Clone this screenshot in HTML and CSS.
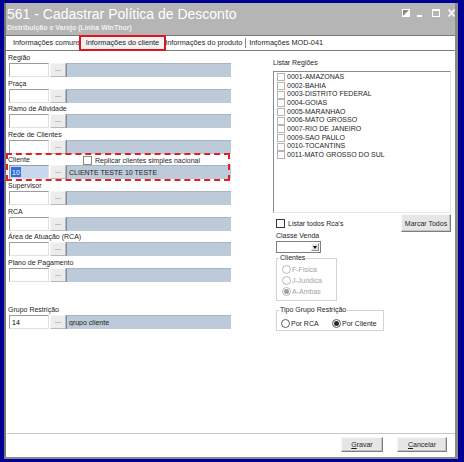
FILE: index.html
```html
<!DOCTYPE html>
<html lang="pt-BR">
<head>
    <meta charset="UTF-8">
    <meta name="viewport" content="width=device-width, initial-scale=1.0">
    <title>561 - Cadastrar Política de Desconto</title>
    <link rel="stylesheet" href="styles.css">
</head>
<body>

<div class="window">
    <header class="titlebar">
        <div class="title-text">
            <h1>561 - Cadastrar Política de Desconto</h1>
            <p class="subtitle">Distribuição e Varejo (Linha WinThor)</p>
        </div>
        <svg class="controls" width="53" height="8" viewBox="0 0 53 8">
            <!-- desacoplar -->
            <rect x="0.5" y="0.5" width="7" height="7" fill="#fff" stroke="#fff"/>
            <path d="M1 1 L7 1 L1 7 Z" fill="#8c8c8c"/>
            <!-- minimizar -->
            <rect x="15" y="6" width="5" height="2" fill="#fff"/>
            <!-- maximizar -->
            <rect x="30.5" y="0.5" width="7" height="7" fill="none" stroke="#fff"/>
            <rect x="30" y="0" width="8" height="2" fill="#fff"/>
            <!-- fechar -->
            <path d="M46.5 0.5 L52.5 7.5 M52.5 0.5 L46.5 7.5" stroke="#fff" stroke-width="1.6"/>
        </svg>
    </header>

    <nav class="tabs">
        <span class="tab">Informações comuns</span>
        <span class="tab active">Informações do cliente</span>
        <span class="tab">Informações do produto</span>
        <span class="tab-sep"></span>
        <span class="tab">Informações MOD-041</span>
    </nav>

    <main class="content">
        <section class="col-left">
            <div class="field">
                <label>Região</label>
                <div class="lookup"><input class="code"><button class="dots">...</button><input class="desc" readonly></div>
            </div>
            <div class="field">
                <label>Praça</label>
                <div class="lookup"><input class="code"><button class="dots">...</button><input class="desc" readonly></div>
            </div>
            <div class="field">
                <label>Ramo de Atividade</label>
                <div class="lookup"><input class="code"><button class="dots">...</button><input class="desc" readonly></div>
            </div>
            <div class="field">
                <label>Rede de Clientes</label>
                <div class="lookup"><input class="code"><button class="dots">...</button><input class="desc" readonly></div>
            </div>
            <div class="field highlight">
                <div class="label-row">
                    <label>Cliente</label>
                    <span class="check-label replicar"><span class="check"></span>Replicar clientes simples nacional</span>
                </div>
                <div class="lookup">
                    <span class="code selected"><span class="sel-text">10</span></span><button class="dots">...</button><input class="desc" readonly value="CLIENTE TESTE 10 TESTE">
                </div>
            </div>
            <div class="field">
                <label>Supervisor</label>
                <div class="lookup"><input class="code"><button class="dots">...</button><input class="desc" readonly></div>
            </div>
            <div class="field">
                <label>RCA</label>
                <div class="lookup"><input class="code"><button class="dots">...</button><input class="desc" readonly></div>
            </div>
            <div class="field">
                <label>Área de Atuação (RCA)</label>
                <div class="lookup"><input class="code"><button class="dots">...</button><input class="desc" readonly></div>
            </div>
            <div class="field">
                <label>Plano de Pagamento</label>
                <div class="lookup"><input class="code"><button class="dots">...</button><input class="desc" readonly></div>
            </div>
            <div class="field grupo">
                <label>Grupo Restrição</label>
                <div class="lookup"><input class="code" value="14"><button class="dots">...</button><input class="desc" readonly value="grupo cliente"></div>
            </div>
        </section>

        <section class="col-right">
            <div class="regions-title">Listar Regiões</div>
            <ul class="region-list">
                <li><span class="check light"></span>0001-AMAZONAS</li>
                <li><span class="check light"></span>0002-BAHIA</li>
                <li><span class="check light"></span>0003-DISTRITO FEDERAL</li>
                <li><span class="check light"></span>0004-GOIAS</li>
                <li><span class="check light"></span>0005-MARANHAO</li>
                <li><span class="check light"></span>0006-MATO GROSSO</li>
                <li><span class="check light"></span>0007-RIO DE JANEIRO</li>
                <li><span class="check light"></span>0009-SAO PAULO</li>
                <li><span class="check light"></span>0010-TOCANTINS</li>
                <li><span class="check light"></span>0011-MATO GROSSO DO SUL</li>
            </ul>

            <div class="rca-row">
                <span class="check-label"><span class="check dark"></span>Listar todos Rca's</span>
                <button class="btn marcar">Marcar Todos</button>
            </div>

            <div class="small-label">Classe Venda</div>
            <div class="combo"><span class="combo-arrow"></span></div>

            <fieldset class="group clientes">
                <legend>Clientes</legend>
                <div class="radio-row disabled"><span class="radio"></span>F-Fisica</div>
                <div class="radio-row disabled"><span class="radio"></span>J-Juridica</div>
                <div class="radio-row disabled"><span class="radio checked"></span>A-Ambas</div>
            </fieldset>

            <fieldset class="group tipo">
                <legend>Tipo Grupo Restrição</legend>
                <div class="radio-line">
                    <span class="radio-row por-rca"><span class="radio"></span>Por RCA</span>
                    <span class="radio-row"><span class="radio checked"></span>Por Cliente</span>
                </div>
            </fieldset>
        </section>
    </main>

    <footer class="footer">
        <button class="btn action"><u>G</u>ravar</button>
        <button class="btn action"><u>C</u>ancelar</button>
    </footer>
</div>

</body>
</html>
```

FILE: styles.css
```css
* {
    box-sizing: border-box;
}
body {
    margin: 0;
    background-color: #000094;
    font-family: "Liberation Sans", Arial, sans-serif;
    font-size: 7px;
    color: #1e1e1e;
}
.window {
    width: 454px;
    height: 456px;
    margin: 3px 0 0 4px;
    background-color: #fff;
    border-left: 2px solid #767676;
    border-right: 3px solid #8a8a8a;
    border-bottom: 2px solid #8a8a8a;
    display: flex;
    flex-direction: column;
}

/* barra de titulo */
.titlebar {
    height: 32px;
    flex-shrink: 0;
    background-color: #b5b5b5;
    color: #fff;
    display: flex;
    justify-content: space-between;
    padding: 2px 0 0 1px;
}
.titlebar h1 {
    margin: 0;
    font-size: 14px;
    font-weight: normal;
    line-height: 18px;
}
.subtitle {
    margin: 0;
    font-size: 7px;
    font-weight: bold;
    line-height: 9px;
    color: #f0f0f0;
}
.controls {
    margin-top: 4px;
}

/* abas */
.tabs {
    height: 16px;
    flex-shrink: 0;
    border-top: 1px solid #7b7b7b;
    border-bottom: 1px solid #7b7b7b;
    display: flex;
    align-items: center;
    padding-left: 6px;
    font-size: 7.3px;
}
.tab {
    line-height: 12px;
    padding: 0 1px;
    white-space: nowrap;
}
.tab.active {
    padding: 0 5px 0 5px;
    margin-left: -1px;
    background-color: #f2f2f2;
    outline: 2px solid #e0141c;
}
.tab-sep {
    width: 1px;
    height: 10px;
    background-color: #8a8a8a;
    margin: 0 2px 0 2px;
}

/* conteudo */
.content {
    flex: 1;
    display: grid;
    grid-template-columns: 226px 178px;
    column-gap: 41px;
}
.col-left {
    padding-top: 2px;
}
.field {
    height: 25.6px;
}
.field label {
    display: block;
    height: 10px;
    line-height: 10px;
    padding-left: 2px;
}
.lookup {
    display: flex;
    height: 14px;
    padding-left: 3px;
}
.code {
    width: 40px;
    height: 14px;
    margin: 0;
    padding: 0 2px;
    font: inherit;
    border: 1px solid;
    border-color: #9c9c9c #e0e0e0 #e0e0e0 #9c9c9c;
    background-color: #fff;
}
.code.selected {
    display: flex;
    align-items: center;
    padding: 1px;
    background-color: #c9d8ee;
}
.sel-text {
    background-color: #2f6fd6;
    color: #fff;
    height: 100%;
    line-height: 11px;
    padding: 0 1px;
}
.dots {
    width: 16px;
    height: 14px;
    margin: 0 0 0 1px;
    padding: 0 0 3px;
    font: inherit;
    font-size: 7px;
    color: #444;
    background-color: #ececec;
    border: 1px solid;
    border-color: #f6f6f6 #b9b9b9 #b9b9b9 #f6f6f6;
}
.desc {
    width: 165px;
    height: 14px;
    margin: 0;
    padding: 0 2px;
    font: inherit;
    color: #1e1e1e;
    background-color: #bdcad9;
    border: none;
    border-left: 1px solid #7f8b98;
    border-top: 1px solid #a9b5c3;
}
.label-row {
    display: flex;
    height: 10px;
    align-items: center;
}
.label-row label {
    width: 77px;
}
.highlight {
    position: relative;
}
/* marcação tracejada sobre o campo Cliente */
.highlight::after {
    content: "";
    position: absolute;
    left: 0;
    right: 2px;
    top: -2px;
    bottom: 0;
    border: 2px dashed #e31e24;
}
.grupo {
    margin-top: 22px;
}

/* caixas de marcar */
.check-label {
    display: flex;
    align-items: center;
}
.check {
    display: inline-block;
    width: 9px;
    height: 9px;
    border: 1px solid #8a8a8a;
    background-color: #fff;
    margin-right: 3px;
}
.check.light {
    width: 8px;
    height: 8px;
    border-color: #b4b4b4;
}
.check.dark {
    border-color: #3a3a3a;
}

/* coluna direita */
.regions-title {
    margin-top: 7px;
    height: 10px;
    line-height: 10px;
    margin-bottom: 3px;
}
.region-list {
    list-style: none;
    margin: 0;
    padding: 1px 0 0 3px;
    height: 142px;
    border: 1px solid;
    border-color: #8c8c8c #e6e6e6 #e6e6e6 #8c8c8c;
}
.region-list li {
    display: flex;
    align-items: center;
    height: 8.67px;
    line-height: 8.67px;
}
.region-list .check {
    margin-right: 2px;
}
.rca-row {
    display: flex;
    justify-content: space-between;
    align-items: center;
    height: 18px;
    margin-top: 1px;
    padding-left: 3px;
}
.btn {
    font: inherit;
    color: #1e1e1e;
    background-color: #e6e6e6;
    border: 1px solid;
    border-color: #f8f8f8 #7d7d7d #7d7d7d #f8f8f8;
    box-shadow: inset -1px -1px 0 #c4c4c4;
    padding: 0;
}
.marcar {
    width: 50px;
    height: 18px;
}
.small-label {
    height: 8px;
    line-height: 8px;
    padding-left: 3px;
}
.combo {
    width: 45px;
    height: 12px;
    margin: 1px 0 0 3px;
    border: 1px solid #7f7f7f;
    background-color: #fff;
    display: flex;
    justify-content: flex-end;
    padding: 1px;
}
.combo-arrow {
    width: 8px;
    background-color: #e4e4e4;
    border: 1px solid;
    border-color: #fafafa #8d8d8d #8d8d8d #fafafa;
    display: flex;
    align-items: center;
    justify-content: center;
}
.combo-arrow::before {
    content: "";
    border-left: 2.5px solid transparent;
    border-right: 2.5px solid transparent;
    border-top: 3px solid #000;
}

/* grupos de opcoes */
.group {
    margin: 1px 0 0 3px;
    padding: 2px 0 3px 2px;
    border: 1px solid #d4d4d4;
    min-inline-size: 0;
}
.group legend {
    padding: 0 1px;
    line-height: 8px;
}
.clientes {
    width: 61px;
}
.tipo {
    width: 108px;
    margin-top: 5px;
    padding: 4px 0 1px 2px;
}
.radio-row {
    display: flex;
    align-items: center;
    height: 11px;
    padding-left: 3px;
}
.radio-line {
    display: flex;
}
.radio-line .radio-row {
    padding-left: 2px;
}
.por-rca {
    width: 51px;
}
.radio {
    width: 9px;
    height: 9px;
    border-radius: 50%;
    border: 1px solid #5e5e5e;
    background-color: #fff;
    margin-right: 1px;
    display: flex;
    align-items: center;
    justify-content: center;
}
.radio.checked::before {
    content: "";
    width: 5px;
    height: 5px;
    border-radius: 50%;
    background-color: #2a2a2a;
}
.disabled {
    color: #a3a3a3;
}
.disabled .radio {
    border-color: #b8b8b8;
    margin-right: 1px;
}
.disabled .radio.checked::before {
    background-color: #a0a0a0;
}

/* rodape */
.footer {
    height: 24px;
    flex-shrink: 0;
    margin-left: 1px;
    border-top: 1px solid #c6c6c6;
    display: flex;
    justify-content: flex-end;
    align-items: flex-start;
    gap: 14px;
    padding: 3px 8px 0 0;
}
.action {
    height: 15px;
    width: 42px;
}
.action + .action {
    width: 50px;
}
```
